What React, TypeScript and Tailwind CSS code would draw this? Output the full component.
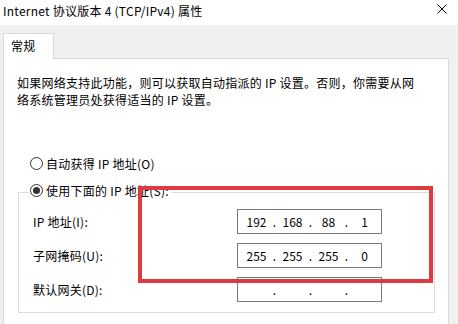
import React from "react";

function Radio({ checked }: { checked?: boolean }) {
  return (
    <span className="w-[13px] h-[13px] rounded-full border border-[#333333] bg-white flex items-center justify-center shrink-0">
      {checked && <span className="w-[7px] h-[7px] rounded-full bg-[#333333]" />}
    </span>
  );
}

function IpBox({ parts }: { parts: string[] }) {
  return (
    <div className="w-[145px] h-[25px] border border-[#7a7a7a] bg-white flex items-center pl-[1px] overflow-hidden tracking-normal">
      {parts.map((p, i) => (
        <React.Fragment key={i}>
          <span className="w-[35px] shrink-0 text-center leading-[17px]">{p}</span>
          {i < 3 && (
            <span className="w-[1px] shrink-0 flex justify-center leading-[17px]">.</span>
          )}
        </React.Fragment>
      ))}
    </div>
  );
}

function Row({ label, parts }: { label: string; parts: string[] }) {
  return (
    <div className="flex items-center h-[25px]">
      <span className="w-[204px] shrink-0 leading-[17px]">{label}</span>
      <IpBox parts={parts} />
    </div>
  );
}

export default function App() {
  return (
    <div className="relative w-[458px] h-[324px] overflow-hidden bg-[#f0f0f0] text-[12px] text-black tracking-[0.25px] font-['Microsoft_YaHei','Noto_Sans_CJK_SC',sans-serif]">
      <div className="h-[25px] bg-white flex items-start justify-between pl-[3px] pr-[11px] pt-[3px]">
        <span className="leading-[16px]">Internet 协议版本 4 (TCP/IPv4) 属性</span>
        <svg width="10" height="10" viewBox="0 0 10 10" className="mt-[1px]">
          <path d="M0.5 0.5 L9.5 9.5 M9.5 0.5 L0.5 9.5" stroke="#000" strokeWidth="1" fill="none" />
        </svg>
      </div>
      <div className="pt-[8px] pl-[3px]">
        <div className="relative z-10 -mb-px w-[51px] h-[26px] bg-white border border-b-0 border-[#d9d9d9] flex items-center pl-[7px] pb-[2px] leading-[17px]">
          常规
        </div>
        <div className="w-[446px] h-[300px] bg-white border border-[#d9d9d9] pl-[13px] pt-[15px]">
          <p className="leading-[17px]">
            如果网络支持此功能，则可以获取自动指派的 IP 设置。否则，你需要从网
            <br />
            络系统管理员处获得适当的 IP 设置。
          </p>
          <div className="mt-[47px] ml-[13px] h-[17px] flex items-center gap-[3px]">
            <Radio />
            <span className="leading-[17px]">自动获得 IP 地址(O)</span>
          </div>
          <div className="relative mt-[20px] ml-[1px] w-[417px] border border-[#dcdcdc] pt-[16px] pb-[10px] pl-[14px] flex flex-col gap-[9px]">
            <div className="absolute left-[10px] top-[-11px] h-[17px] bg-white pl-[1px] pr-[2px] flex items-center gap-[3px]">
              <Radio checked />
              <span className="leading-[17px]">使用下面的 IP 地址(S):</span>
            </div>
            <Row label="IP 地址(I):" parts={["192", "168", "88", "1"]} />
            <Row label="子网掩码(U):" parts={["255", "255", "255", "0"]} />
            <Row label="默认网关(D):" parts={["", "", "", ""]} />
          </div>
        </div>
      </div>
      <div className="absolute left-[138px] top-[186px] w-[295px] h-[97px] border-[4px] border-[#dd3b3f] pointer-events-none" />
    </div>
  );
}
